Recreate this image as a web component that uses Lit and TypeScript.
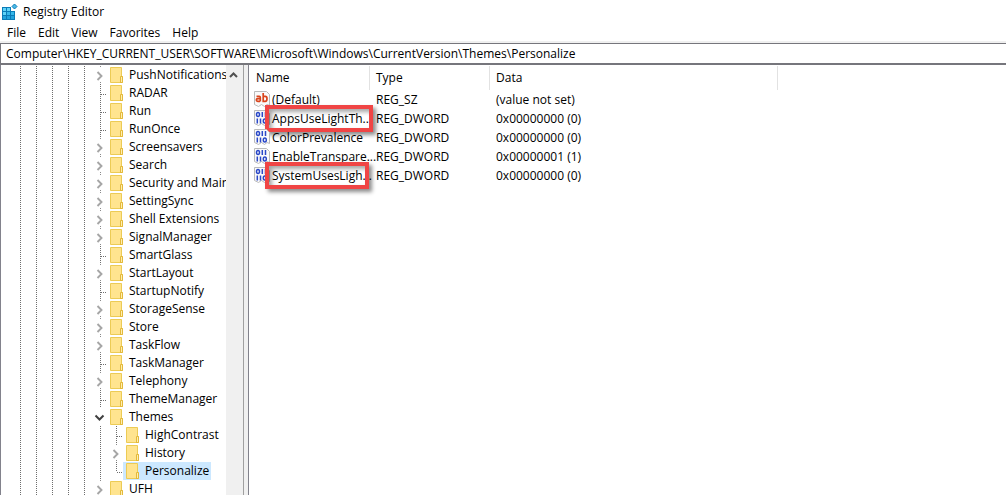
import { LitElement, html, css, svg, nothing } from "lit";
import { customElement, property } from "lit/decorators.js";

type Kind = "leaf" | "closed" | "open";
interface TreeNode {
  name: string;
  kind: Kind;
  depth: number;
  last?: boolean;
  selected?: boolean;
}
interface RegValue {
  name: string;
  type: string;
  data: string;
  mark?: "wide" | "tight";
}

const node = (name: string, kind: Kind = "leaf", depth = 6): TreeNode => ({ name, kind, depth });

const NODES: TreeNode[] = [
  node("PushNotifications", "closed"),
  node("RADAR"),
  node("Run"),
  node("RunOnce"),
  node("Screensavers", "closed"),
  node("Search", "closed"),
  node("Security and Maintenance", "closed"),
  node("SettingSync", "closed"),
  node("Shell Extensions", "closed"),
  node("SignalManager", "closed"),
  node("SmartGlass"),
  node("StartLayout", "closed"),
  node("StartupNotify"),
  node("StorageSense", "closed"),
  node("Store", "closed"),
  node("TaskFlow", "closed"),
  node("TaskManager"),
  node("Telephony", "closed"),
  node("ThemeManager"),
  node("Themes", "open"),
  node("HighContrast", "leaf", 7),
  node("History", "closed", 7),
  { name: "Personalize", kind: "leaf", depth: 7, last: true, selected: true },
  node("UFH", "closed"),
];

const VALUES: RegValue[] = [
  { name: "(Default)", type: "REG_SZ", data: "(value not set)" },
  { name: "AppsUseLightTh...", type: "REG_DWORD", data: "0x00000000 (0)", mark: "wide" },
  { name: "ColorPrevalence", type: "REG_DWORD", data: "0x00000000 (0)" },
  { name: "EnableTranspare...", type: "REG_DWORD", data: "0x00000001 (1)" },
  { name: "SystemUsesLigh...", type: "REG_DWORD", data: "0x00000000 (0)", mark: "tight" },
];

@customElement("reg-tree")
export class RegTree extends LitElement {
  @property({ attribute: false }) nodes: TreeNode[] = [];

  static styles = css`
    :host {
      display: flex;
      min-height: 0;
      overflow: hidden;
      background: #fff;
    }
    .list {
      flex: 1;
      min-width: 0;
      overflow: hidden;
      margin: 0;
      padding: 1px 0 0 10px;
      list-style: none;
    }
    .item {
      display: flex;
      height: 18px;
      line-height: 18px;
      white-space: nowrap;
    }
    .guide {
      flex: none;
      width: 16px;
      height: 18px;
    }
    .toggle {
      flex: none;
      width: 16px;
      height: 18px;
      padding: 0;
      border: 0;
      background: none;
    }
    .label {
      display: flex;
      padding-right: 2px;
    }
    .selected {
      background: #cce8ff;
    }
    .folder {
      flex: none;
      width: 22px;
      height: 18px;
    }
    svg {
      display: block;
    }
    .scroll {
      flex: none;
      width: 17px;
      background: #f0f0f0;
    }
    .up {
      display: block;
      width: 17px;
      height: 18px;
      padding: 0;
      border: 0;
      background: none;
    }
  `;

  private guide() {
    return html`<svg class="guide" viewBox="0 0 16 18" aria-hidden="true">
      <path d="M9.5 0V18" stroke="#6e6e6e" stroke-dasharray="1 1" fill="none" />
    </svg>`;
  }

  private junction(n: TreeNode) {
    if (n.kind === "leaf") {
      return html`<svg class="guide" viewBox="0 0 16 18" aria-hidden="true">
        <path d=${n.last ? "M9.5 0V10M10 10.5H16" : "M9.5 0V18M10 10.5H16"}
          stroke="#6e6e6e" stroke-dasharray="1 1" fill="none" />
      </svg>`;
    }
    const open = n.kind === "open";
    return html`<button class="toggle" aria-label="${open ? "Collapse" : "Expand"} ${n.name}">
      <svg width="16" height="18" viewBox="0 0 16 18" aria-hidden="true">
        ${open
          ? svg`<path d="M4.5 7.5L8.5 11.5L12.5 7.5" stroke="#404040" stroke-width="2" fill="none" />`
          : svg`<path d="M9.5 0V2M9.5 16V18" stroke="#8a8a8a" stroke-dasharray="1 1" fill="none" />
              <path d="M6.5 6L10.5 10L6.5 14" stroke="#a6a6a6" stroke-width="1.9" fill="none" />`}
      </svg>
    </button>`;
  }

  render() {
    return html`
      <ul class="list" role="tree" aria-label="Registry keys">
        ${this.nodes.map(
          (n) => html`<li class="item" role="treeitem" aria-selected=${n.selected ? "true" : "false"}>
            ${Array.from({ length: n.depth - 1 }, () => this.guide())}${this.junction(n)}
            <span class="label ${n.selected ? "selected" : ""}">
              <svg class="folder" viewBox="0 0 22 18" aria-hidden="true">
                <path d="M3.5 1.5H14.5V10.5H15.5V16.5H3.5Z" fill="#ffe48f" stroke="#eccb55" />
                <path d="M13.5 16V10.5H15.5V16.5H13" fill="#ffeeb0" stroke="#e3b93a" />
              </svg><span>${n.name}</span>
            </span>
          </li>`
        )}
      </ul>
      <div class="scroll">
        <button class="up" aria-label="Scroll up">
          <svg width="17" height="18" viewBox="0 0 17 18" aria-hidden="true">
            <path d="M4 12L7.5 8.5L11 12" stroke="#505050" stroke-width="2" fill="none" />
          </svg>
        </button>
      </div>
    `;
  }
}

@customElement("reg-values")
export class RegValues extends LitElement {
  @property({ attribute: false }) values: RegValue[] = [];

  static styles = css`
    :host {
      display: block;
      overflow: hidden;
      background: #fff;
    }
    .table {
      width: 529px;
      margin-top: 1px;
      table-layout: fixed;
      border-collapse: separate;
      border-spacing: 0;
    }
    .narrow {
      width: 120px;
    }
    .head {
      height: 24px;
      padding: 0 0 0 7px;
      box-sizing: border-box;
      font-weight: normal;
      text-align: left;
    }
    .head + .head {
      padding-left: 6px;
      border-left: 1px solid #e2e2e2;
    }
    .head:last-child {
      border-right: 1px solid #e2e2e2;
    }
    .cell {
      height: 19px;
      padding: 0 0 0 7px;
      line-height: 19px;
      white-space: nowrap;
    }
    .first {
      padding: 0 0 0 5px;
    }
    .name {
      position: relative;
      display: flex;
      gap: 2px;
    }
    .icon {
      flex: none;
      width: 16px;
      height: 19px;
    }
    .mark {
      position: absolute;
      inset: -4px -4px -4px 11px;
      border: 4px solid #f04545;
      box-shadow: 3px 3px 4px rgba(0, 0, 0, 0.45), inset 3px 3px 4px rgba(0, 0, 0, 0.35);
      pointer-events: none;
    }
    .tight {
      right: 0;
    }
  `;

  private icon(type: string) {
    return html`<svg class="icon" viewBox="0 0 16 19" aria-hidden="true">
      <path d="M.5 1.5H12.5L15.5 4.5V15.5L13 14.5L10.5 16.5L7.5 14.5L4.5 16.5L.5 14.5Z" fill="#fafafa" stroke="#bababa" />
      ${type === "REG_SZ"
        ? svg`<g fill="none" stroke="#d9441c" stroke-width="1.7">
            <path d="M2.5 6.3H5.3Q6.3 6.3 6.3 7.5V11.5M6.3 8.7H3.8Q2.3 8.7 2.3 10Q2.3 11.3 3.8 11.3H6" />
            <path d="M9.2 3V11.3H11.3Q13 11.3 13 8.8Q13 6.4 11.3 6.4H9.2" />
          </g>`
        : svg`<g fill="none" stroke="#2a48c8" stroke-width="1.5">
            <ellipse cx="4" cy="5.5" rx="1.5" ry="2" /><path d="M8.3 3V8M11.5 3V8" />
            <path d="M3.3 9.5V14.5M6.5 9.5V14.5" /><ellipse cx="10.8" cy="12" rx="1.5" ry="2" />
          </g>`}
    </svg>`;
  }

  render() {
    return html`<table class="table">
      <colgroup><col class="narrow" /><col class="narrow" /><col /></colgroup>
      <thead>
        <tr><th class="head" scope="col">Name</th><th class="head" scope="col">Type</th><th class="head" scope="col">Data</th></tr>
      </thead>
      <tbody>
        ${this.values.map(
          (v) => html`<tr>
            <td class="cell first">
              <div class="name">
                ${this.icon(v.type)}<span>${v.name}</span>
                ${v.mark ? html`<span class="mark ${v.mark}"></span>` : nothing}
              </div>
            </td>
            <td class="cell">${v.type}</td>
            <td class="cell">${v.data}</td>
          </tr>`
        )}
      </tbody>
    </table>`;
  }
}

@customElement("app-root")
export class AppRoot extends LitElement {
  static styles = css`
    :host {
      display: flex;
      flex-direction: column;
      height: 100vh;
      overflow: hidden;
      background: #fff;
      color: #000;
      font: 12px/18px "Open Sans", "Noto Sans", sans-serif;
    }
    .title {
      display: flex;
      align-items: center;
      gap: 5px;
      height: 24px;
      padding-left: 2px;
    }
    .menu {
      display: flex;
      height: 17px;
      padding-left: 1px;
    }
    .entry {
      height: 17px;
      padding: 0 6px;
      border: 0;
      background: none;
      color: inherit;
      font: inherit;
    }
    .address {
      height: 22px;
      box-sizing: border-box;
      padding: 0 0 0 5px;
      border: 1px solid #76767c;
      border-bottom-width: 2px;
      border-right: 0;
      background: #fff;
      color: inherit;
      font: inherit;
      outline: 0;
      border-radius: 0;
    }
    .bar {
      display: flex;
      flex-direction: column;
      border-top: 2px solid #f0f0f0;
    }
    .panes {
      flex: 1;
      min-height: 0;
      display: grid;
      grid-template-columns: 244px 1fr;
      gap: 4px;
      background: #f0f0f0;
    }
    .left {
      border-left: 1px solid #82828c;
      border-right: 1px solid #a0a0a0;
    }
    .right {
      border-left: 1px solid #82828c;
    }
  `;

  render() {
    return html`
      <div class="title">
        <svg width="16" height="20" viewBox="0 0 16 20" aria-hidden="true">
          <path d="M0 5H9V9H13V18H0Z" fill="#0b7cb8" />
          <g fill="#5fd3f7">
            <path d="M1 6H4V9H1ZM5 6H8V9H5ZM1 10H4V13H1Z" />
            <path d="M5 10H8V13H5ZM9 10H12V13H9Z" fill="#36b8ea" />
            <path d="M1 14H4V17H1ZM5 14H8V17H5ZM9 14H12V17H9Z" fill="#22a3dc" />
          </g>
          <path d="M12.5 2L15 4.5L12.5 7L10 4.5Z" fill="#49b9e6" stroke="#0b7cb8" />
        </svg>
        <span>Registry Editor</span>
      </div>
      <nav class="menu" aria-label="Menu bar">
        ${["File", "Edit", "View", "Favorites", "Help"].map((m) => html`<button class="entry">${m}</button>`)}
      </nav>
      <div class="bar">
        <input
          class="address"
          aria-label="Registry path"
          .value=${"Computer\\HKEY_CURRENT_USER\\SOFTWARE\\Microsoft\\Windows\\CurrentVersion\\Themes\\Personalize"}
        />
      </div>
      <main class="panes">
        <reg-tree class="left" .nodes=${NODES}></reg-tree>
        <reg-values class="right" .values=${VALUES}></reg-values>
      </main>
    `;
  }
}
